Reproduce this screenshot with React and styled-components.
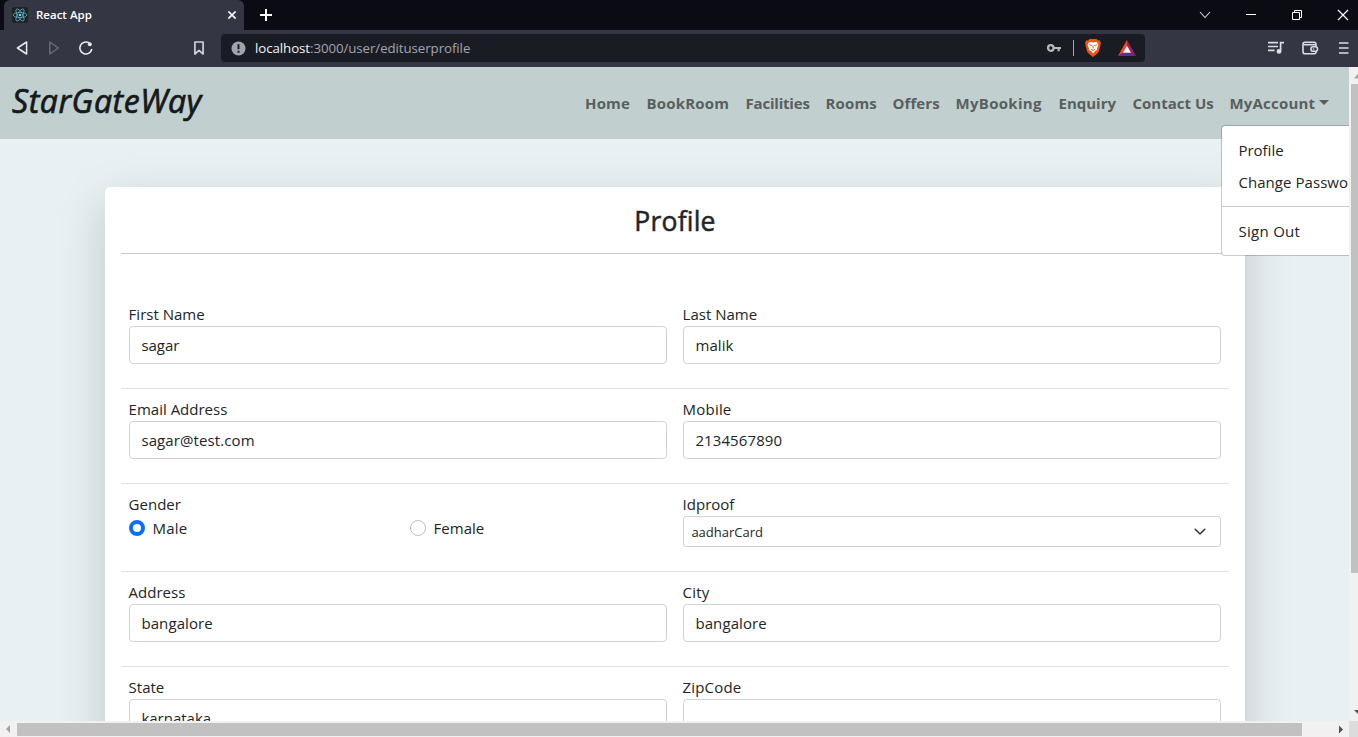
import React from "react";
import styled, { createGlobalStyle } from "styled-components";

const Global = createGlobalStyle`
  * { box-sizing: border-box; }
  html, body { margin: 0; overflow: hidden; }
  body { font-family: "Open Sans", "Noto Sans", sans-serif; font-size: 15px; line-height: 24px; color: #212529; }
`;

const Window = styled.div`
  width: 1358px; height: 737px; overflow: hidden;
  display: flex; flex-direction: column;
`;
const TabStrip = styled.div`
  height: 30px; flex: none; background: #0b0b14; padding-left: 4px;
  display: flex; align-items: stretch; color: #fff;
`;
const Tab = styled.div`
  width: 240px; background: #343644; border-radius: 6px 6px 0 0;
  display: flex; align-items: center; padding: 0 8px;
`;
const TabTitle = styled.span`
  flex: 1; margin-left: 8px; font-size: 11.5px; font-weight: 600; letter-spacing: 0; line-height: 16px;
`;
const Icon = styled.svg`
  display: block; flex: none; fill: none; margin-left: ${(p) => p.$ml || 0}px;
`;
const WindowButtons = styled.div`
  margin-left: auto; display: flex; align-items: center; padding-right: 9px;
`;
const Toolbar = styled.div`
  height: 37px; flex: none; background: #343644; display: flex; align-items: center;
  padding: 0 0 1px 14px; overflow: hidden;
`;
const AddressBar = styled.div`
  margin-left: 16px; width: 924px; height: 28px; border-radius: 4px; background: #1a1c24; flex: none;
  display: flex; align-items: center; padding: 0 9px 0 10px;
`;
const Url = styled.span`
  margin-left: 9px; flex: 1; font-size: 13.3px; letter-spacing: -0.08px; color: #a2a4ac; line-height: 18px;
  b { color: #f2f2f4; font-weight: 400; }
`;
const BarDivider = styled.i`
  width: 1px; height: 16px; background: #a8a9ae; margin: 0 11px 0 11px;
`;

const Viewport = styled.div`
  height: 654px; display: flex; flex: none;
`;
const Page = styled.div`
  position: relative; width: 1349px; height: 654px; overflow: hidden; background: #e8f0f3; flex: none;
`;
const Navbar = styled.nav`
  height: 72px; background: #c1cfce; display: flex; justify-content: space-between;
  padding: 0 20.5px 0 12px; position: relative;
`;
const Brand = styled.a`
  font-size: 32px; line-height: 48px; margin-top: 9.5px; font-style: italic; font-weight: 400;
  letter-spacing: 0.55px; color: #14191a; white-space: nowrap; -webkit-text-stroke: 0.7px #14191a;
`;
const NavLinks = styled.div`
  display: flex; gap: 16px; height: 24px; margin-top: 24px;
`;
const NavLink = styled.a`
  width: ${(p) => p.$w}px; flex: none; font-weight: 700; color: #595f5f; white-space: nowrap;
  letter-spacing: ${(p) => p.$ls || 0}px; display: flex; align-items: center;
`;
const Caret = styled.i`
  border: 5px solid transparent; border-top-color: #595f5f; border-bottom: 0; margin-left: auto; margin-bottom: 2px;
`;
const Menu = styled.div`
  position: absolute; left: 1221px; top: 58px; width: 170px; padding: 8px 0; background: #fff;
  border: 1px solid rgba(0, 0, 0, 0.2); border-radius: 4px; background-clip: padding-box; z-index: 2;
`;
const MenuItem = styled.a`
  display: block; padding: 4px 16px 4px 16.4px; white-space: nowrap; letter-spacing: ${(p) => p.$ls || 0}px;
`;
const MenuDivider = styled.div`
  height: 1px; background: #c4c6c8; margin: 8px 0;
`;

const Card = styled.main`
  width: 1140px; height: 700px; margin: 48px 0 0 105px; padding: 16px; background: #fff; border-radius: 5px;
  box-shadow: 0 16px 48px rgba(0, 0, 0, 0.175);
`;
const Title = styled.h3`
  margin: 0; height: 50px; padding-top: 1px; font-size: 26.5px; line-height: 34px; font-weight: 400; text-align: center;
  letter-spacing: 0.2px; -webkit-text-stroke: 0.5px #212529;
`;
const Rule = styled.div`
  height: 1px; background: #c8c9ca; margin-bottom: 39px;
`;
const Row = styled.div`
  display: grid; grid-template-columns: 538px 538px; column-gap: 16px; padding: 8px 8px 24px;
  border-top: 1px solid ${(p) => (p.$first ? "transparent" : "#dee2e6")};
`;
const Label = styled.label`
  display: block; height: 24px; margin-left: -0.4px; letter-spacing: ${(p) => p.$ls || 0}px;
`;
const Input = styled.div`
  height: 38px; border: 1px solid #ced4da; border-radius: 4px; padding: 6px 12px 6px 11.4px;
  letter-spacing: ${(p) => p.$ls || 0}px;
`;
const Select = styled.div`
  height: 31px; border: 1px solid #ced4da; border-radius: 3px; padding: 0 12px 0 7.4px;
  display: flex; align-items: center; justify-content: space-between; font-size: 13px;
`;
const Radios = styled.div`
  display: grid; grid-template-columns: 281px 1fr; height: 24px;
`;
const RadioOption = styled.div`
  display: flex; align-items: center; gap: 7.6px; letter-spacing: ${(p) => p.$ls || 0}px;
`;
const Dot = styled.i`
  width: 16px; height: 16px; border-radius: 50%; background: #fff;
  border: ${(p) => (p.$on ? "4.5px solid #0d6efd" : "1px solid #bfbfbf")};
`;

const VBar = styled.div`
  flex: 1; background: #f1f1f1; overflow: hidden; display: flex; flex-direction: column; padding-left: 2px;
`;
const VThumb = styled.div`
  height: 489px; background: #c1c1c1; flex: none;
`;
const HBar = styled.div`
  height: 16px; flex: none; display: flex; align-items: center; background: #f1f1f1;
`;
const HThumb = styled.div`
  width: 1285px; height: 13px; background: #c1c1c1; margin-left: 6px;
`;
const Corner = styled.div`
  width: 9px; height: 16px; background: #dcdcdc; margin-left: auto;
`;

function Field({ label, value, ls, vls }) {
  return (
    <div>
      <Label $ls={ls}>{label}</Label>
      <Input $ls={vls}>{value}</Input>
    </div>
  );
}

const links = [
  ["Home", 45.5, 0.15], ["BookRoom", 83, 0.2], ["Facilities", 64, -0.2], ["Rooms", 51, 0.15], ["Offers", 47, 0.1],
  ["MyBooking", 87, 0.3], ["Enquiry", 58, 0], ["Contact Us", 81, 0],
];

function BrowserChrome() {
  return (
    <>
      <TabStrip>
        <Tab>
          <Icon width="16" height="16" viewBox="0 0 16 16">
            <rect width="16" height="16" rx="2" fill="#222222" />
            <g stroke="#52b3c9" strokeWidth="0.8">
              <ellipse cx="8" cy="8" rx="6.8" ry="2.6" />
              <ellipse cx="8" cy="8" rx="6.8" ry="2.6" transform="rotate(60 8 8)" />
              <ellipse cx="8" cy="8" rx="6.8" ry="2.6" transform="rotate(120 8 8)" />
            </g>
            <circle cx="8" cy="8" r="1.3" fill="#61dafb" />
          </Icon>
          <TabTitle>React App</TabTitle>
          <Icon width="8" height="8" viewBox="0 0 8 8" stroke="#fff" strokeWidth="1.6"><path d="M.4.4l7.2 7.2M7.6.4L.4 7.6" /></Icon>
        </Tab>
        <Icon width="12" height="30" $ml={16} stroke="#fff" strokeWidth="2"><path d="M0 15h12M6 9v12" /></Icon>
        <WindowButtons>
          <Icon width="12" height="12" stroke="#d5d5d8" strokeWidth="1.1"><path d="M1 3l5 5.5L11 3" /></Icon>
          <Icon width="10" height="12" $ml={35} stroke="#fff"><path d="M0 5.5h10" /></Icon>
          <Icon width="12" height="12" $ml={35} stroke="#fff"><path d="M1.5 3.5h7v7h-7zM3.5 3.5v-2h7v7h-2" /></Icon>
          <Icon width="12" height="12" $ml={34} stroke="#fff" strokeWidth="1.2"><path d="M1 1l10 10M11 1L1 11" /></Icon>
        </WindowButtons>
      </TabStrip>
      <Toolbar>
        <Icon width="16" height="18" stroke="#e8e8ea" strokeWidth="1.5" strokeLinejoin="round"><path d="M12.6 3v12L3.4 9z" /></Icon>
        <Icon width="16" height="18" $ml={16} stroke="#6b6d78" strokeWidth="1.5" strokeLinejoin="round"><path d="M3.8 3v12L12.4 9z" /></Icon>
        <Icon width="18" height="18" $ml={15} stroke="#e8e8ea" strokeWidth="1.6">
          <path d="M12.2 4A6 6 0 1 0 14.8 10" /><circle cx="12.8" cy="5.2" r="2" fill="#e8e8ea" stroke="none" />
        </Icon>
        <Icon width="12" height="18" $ml={98} stroke="#d0d1d6" strokeWidth="1.7" strokeLinejoin="round"><path d="M1.9 3h8.2v12L6 11.4 1.9 15z" /></Icon>
        <AddressBar>
          <Icon width="15" height="15" viewBox="0 0 15 15"><circle cx="7.5" cy="7.5" r="7" fill="#a2a4ac" /><path d="M7.5 3.3v5M7.5 9.8v2" stroke="#1a1c24" strokeWidth="2" /></Icon>
          <Url><b>localhost</b>:3000/user/edituserprofile</Url>
          <Icon width="16" height="10" viewBox="0 0 16 10" stroke="#b7b8bd"><circle cx="4.8" cy="5" r="2.8" strokeWidth="2.2" /><path d="M8 5h7M12.600 5v3.200" strokeWidth="2.200" /></Icon>
          <BarDivider />
          <Icon width="16" height="18" viewBox="0 0 16 18">
            <path d="M4.5 0h7L13 1.4l1.6-.1L16 4l-.6 1.6.1 1-1.8 6.4L11.8 15 8 18l-3.8-3-1.9-2L.5 6.6l.1-1L0 4l1.4-2.7L3 1.4z" fill="#fb4f14" />
            <path d="M4.5 2.8l3.500.6 3.500-.6 1.900 3-1.400 3.700.2 1.200-2.300 1.600L8 14.600l-1.900-2.300-2.300-1.600.2-1.200-1.400-3.700z" fill="#fff" />
            <path d="M4.200 5.800l2.500.8M11.800 5.800l-2.500.8M6.200 10.400l1.800.9 1.800-.9M8 6.500v3" stroke="#fb4f14" />
          </Icon>
          <Icon width="18" height="16" viewBox="0 0 18 16" $ml={17}>
            <path d="M9 0L0 16l5.500-3.200L9 6z" fill="#ff4724" />
            <path d="M9 0l9 16-5.500-3.200L9 6z" fill="#9e1f63" />
            <path d="M0 16h18l-5.500-3.400h-7z" fill="#662d91" />
            <path d="M9 5.800l4 7H5z" fill="#fff" />
          </Icon>
        </AddressBar>
        <Icon width="17" height="18" $ml={123} stroke="#dcdde0" strokeWidth="1.6">
          <path d="M0 3.600h10M0 7.500h10M0 11.400h6.500" /><path d="M12.600 12V3.600H16" strokeWidth="1.700" /><circle cx="11" cy="12.400" r="2.400" fill="#dcdde0" stroke="none" />
        </Icon>
        <Icon width="18" height="18" $ml={17} stroke="#dcdde0" strokeWidth="1.600" strokeLinejoin="round">
          <rect x="1" y="3.200" width="13" height="11.500" rx="2" /><path d="M1.500 5.700h12" /><rect x="9" y="7.700" width="6.500" height="4.500" rx="2" fill="#343644" /><circle cx="11.500" cy="10" r=".8" fill="#dcdde0" stroke="none" />
        </Icon>
        <Icon width="10" height="18" $ml={19} stroke="#dcdde0" strokeWidth="1.700"><path d="M0 4h9.500M0 9h9.500M0 14h9.500" /></Icon>
      </Toolbar>
    </>
  );
}

export default function App() {
  return (
    <Window>
      <Global />
      <BrowserChrome />
      <Viewport>
        <Page>
          <Navbar>
            <Brand>StarGateWay</Brand>
            <NavLinks>
              {links.map(([text, w, ls]) => <NavLink key={text} $w={w} $ls={ls}>{text}</NavLink>)}
              <NavLink $w={99} $ls={0.2}>MyAccount<Caret /></NavLink>
            </NavLinks>
            <Menu>
              <MenuItem>Profile</MenuItem>
              <MenuItem $ls={0.06}>Change Password</MenuItem>
              <MenuDivider />
              <MenuItem $ls={0.3}>Sign Out</MenuItem>
            </Menu>
          </Navbar>
          <Card>
            <Title>Profile</Title>
            <Rule />
            <Row $first>
              <Field label="First Name" value="sagar" />
              <Field label="Last Name" value="malik" vls={0.1} />
            </Row>
            <Row>
              <Field label="Email Address" value="sagar@test.com" vls={0.1} />
              <Field label="Mobile" value="2134567890" ls={0.2} vls={0.1} />
            </Row>
            <Row>
              <div>
                <Label>Gender</Label>
                <Radios>
                  <RadioOption $ls={0.15}>
                    <Dot $on />
                    Male
                  </RadioOption>
                  <RadioOption>
                    <Dot />
                    Female
                  </RadioOption>
                </Radios>
              </div>
              <div>
                <Label>Idproof</Label>
                <Select>
                  aadharCard
                  <Icon width="16" height="12" viewBox="0 0 16 12" stroke="#343a40" strokeWidth="1.600" strokeLinecap="round" strokeLinejoin="round"><path d="M3.200 3.300L8 8l4.800-4.700" /></Icon>
                </Select>
              </div>
            </Row>
            <Row>
              <Field label="Address" value="bangalore" vls={0.1} />
              <Field label="City" value="bangalore" ls={0.15} vls={0.1} />
            </Row>
            <Row>
              <Field label="State" value="karnataka" />
              <Field label="ZipCode" value="" ls={0.15} />
            </Row>
          </Card>
        </Page>
        <VBar>
          <Icon width="7" height="17"><path d="M7 6.500v5H3z" fill="#a3a3a3" /></Icon>
          <VThumb />
          <Icon width="7" height="148"><path d="M3 137h4v4z" fill="#505050" /></Icon>
        </VBar>
      </Viewport>
      <HBar>
        <Icon width="11" height="16"><path d="M10 4v8L6 8z" fill="#a3a3a3" /></Icon>
        <HThumb />
        <Icon width="6" height="16" $ml={36}><path d="M1 4.500v8l4-4z" fill="#505050" /></Icon>
        <Corner />
      </HBar>
    </Window>
  );
}
